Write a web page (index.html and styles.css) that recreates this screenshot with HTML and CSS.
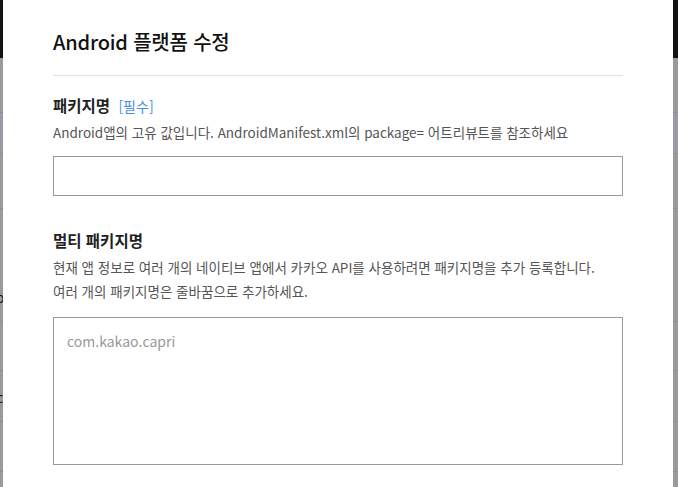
FILE: index.html
```html
<!DOCTYPE html>
<html lang="ko">
  <head>
    <meta charset="utf-8">
    <title>Android 플랫폼 수정</title>
    <link rel="stylesheet" href="styles.css">
  </head>
  <body>
    <div class="backdrop">
      <div class="bd-top"></div>
      <div class="bd-row" style="height:54px"></div>
      <div class="bd-row bd-blue" style="height:40px"></div>
      <div class="bd-row" style="height:54px"></div>
      <div class="bd-row" style="height:112px"><span class="bd-char">o</span></div>
      <div class="bd-row" style="height:48px"></div>
      <div class="bd-row" style="height:50px"><span class="bd-char">c</span></div>
      <div class="bd-row" style="height:49px"></div>
    </div>

    <div class="modal">
      <h1 class="modal-title">Android 플랫폼 수정</h1>

      <div class="field">
        <div class="field-label">패키지명 <span class="required">[필수]</span></div>
        <p class="field-desc">Android앱의 고유 값입니다. AndroidManifest.xml의 package= 어트리뷰트를 참조하세요</p>
        <input class="text-input" type="text">
      </div>

      <div class="field field-multi">
        <div class="field-label">멀티 패키지명</div>
        <p class="field-desc">현재 앱 정보로 여러 개의 네이티브 앱에서 카카오 API를 사용하려면 패키지명을 추가 등록합니다.<br>여러 개의 패키지명은 줄바꿈으로 추가하세요.</p>
        <textarea class="text-area" placeholder="com.kakao.capri"></textarea>
      </div>
    </div>
  </body>
</html>
```

FILE: styles.css
```css
html, body{margin:0; padding:0; height:100%; overflow:hidden;}
body{font-family:"Noto Sans CJK KR", "Noto Sans", sans-serif; color:#222; background:#9a9a9a;}

/* dimmed page behind the dialog */
.backdrop{height:100%;}
.bd-top{height:58px; background:#121212;}
.bd-row{border-bottom:1px solid #8e8e8e; position:relative;}
.bd-blue{background:#9a9aa6;}
.bd-char{position:absolute; left:-4px; bottom:14px; font-size:14px; color:#111;}

.modal{position:absolute; top:0; left:3px; width:670px; bottom:0; background:#fff; box-sizing:border-box; padding:0 50px;}
.modal-title{margin:0; padding:28px 0 19px; font-size:20px; font-weight:500; line-height:28px; color:#111; border-bottom:1px solid #e2e2e2; letter-spacing:-0.2px;}

.field{margin-top:18px;}
.field-multi{margin-top:33px;}
.field-label{font-size:15.5px; font-weight:700; line-height:22px; color:#222;}
.required{font-size:14px; font-weight:400; color:#4a90e2; margin-left:4px;}
.field-desc{margin:3px 0 12px; font-size:13.5px; line-height:24px; color:#555;}
.field-multi .field-desc{margin:4px 0 14px;}

.text-input{display:block; width:100%; height:40px; box-sizing:border-box; border:1px solid #999; margin:0; padding:0 13px; font-family:inherit; font-size:14px; outline:none;}
.text-area{display:block; width:100%; height:148px; box-sizing:border-box; border:1px solid #999; margin:0; padding:11px 13px; font-family:inherit; font-size:14px; line-height:24px; resize:none; outline:none;}
.text-area::placeholder{color:#999;}
```
